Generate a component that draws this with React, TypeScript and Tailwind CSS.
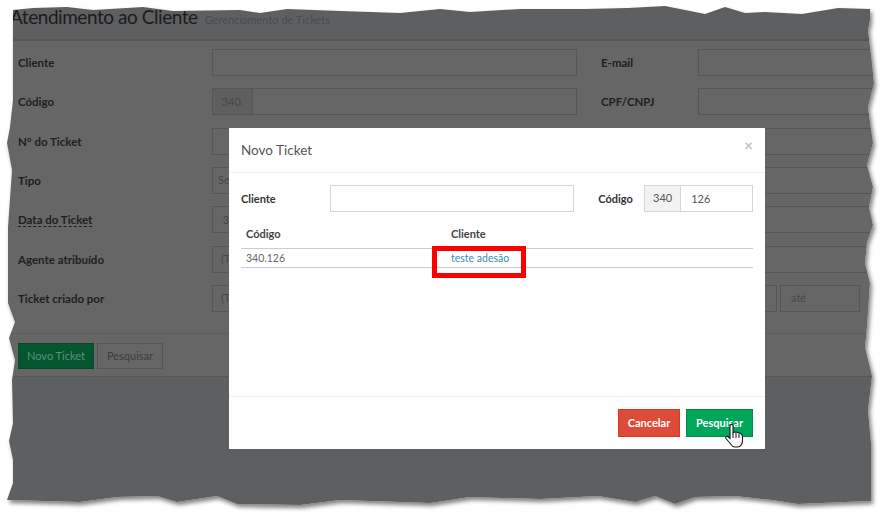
const font = { fontFamily: '"Lato", "Open Sans", sans-serif' };

const outline =
  'M13 10 L33 8 L67 7 L93 10 L143 7 L173 11 L240 10 L260 13 L287 9 L340 11 L400 13 L440 9 L470 12 L520 9 L585 9 L628 8 L665 6 L705 14 L725 7 L745 13 L765 12 L802 14 L838 8 L870 9 L870 20 L868 30 L872 63 L874 83 L868 107 L873 143 L867 165 L873 187 L869 207 L873 225 L867 242 L865 263 L870 283 L867 327 L865 347 L872 376 L868 410 L871 443 L871 501 L845 502 L798 504 L772 500 L735 496 L695 497 L675 504 L655 496 L635 502 L598 496 L540 499 L470 497 L430 503 L340 500 L300 505 L237 504 L217 496 L177 502 L157 496 L117 497 L80 502 L7 500 L13 483 L13 460 L9 441 L13 423 L12 380 L15 360 L9 338 L15 322 L8 303 L8 227 L12 170 L7 143 L10 127 L13 100 L13 33 Z';
const frame = 'M0 0H885V515H0Z ' + outline;

function Field({ className, children }: { className: string; children?: React.ReactNode }) {
  return (
    <div className={`h-[27px] border border-[#555657] text-[11px] text-[#474747] flex items-center ${className}`}>
      {children}
    </div>
  );
}

function Row({ label, right, left, dashed, rightField }: { label: string; right?: string; left?: React.ReactNode; dashed?: boolean; rightField?: React.ReactNode }) {
  return (
    <div className="flex items-center h-[27px] mb-[12.33px]">
      <div className="w-[212px] pl-[18px] shrink-0 text-[11.5px] font-bold text-[#202020]">
        <span className={dashed ? 'border-b border-dashed border-[#202020]' : ''}>{label}</span>
      </div>
      <div className="w-[365px] shrink-0">{left ?? <Field className="w-full" />}</div>
      {rightField ?? (
        <>
          <div className="w-[121px] pl-6 shrink-0 text-[11.5px] font-bold text-[#202020]">{right}</div>
          <Field className="flex-1 mr-[-40px]" />
        </>
      )}
    </div>
  );
}

export default function App() {
  return (
    <div className="relative w-[885px] h-[515px] overflow-hidden bg-[#5e5f60]" style={font}>
      <div className="h-[41px] border-b-2 border-[#555657] flex items-baseline pl-[10px] pt-[3px]">
        <span className="text-[19px] tracking-[-0.45px] text-[#1c1c1c]">Atendimento ao Cliente</span>
        <span className="ml-[7px] text-[11px] text-[#4a4b4c]">Gerenciamento de Tickets</span>
      </div>

      <div className="h-[336px] bg-[#666666] border-b border-[#555657] pt-[8px]">
        <Row label="Cliente" right="E-mail" />
        <Row
          label="Código"
          right="CPF/CNPJ"
          left={
            <div className="flex">
              <Field className="w-[41px] bg-[#5f5f5f] justify-center">340.</Field>
              <Field className="flex-1 border-l-0" />
            </div>
          }
        />
        <Row label="N° do Ticket" />
        <Row label="Tipo" left={<Field className="w-full pl-[5px]">Se</Field>} />
        <Row label="Data do Ticket" dashed left={<Field className="w-full pl-[10px]">3</Field>} />
        <Row label="Agente atribuído" left={<Field className="w-full pl-2">(T</Field>} />
        <Row
          label="Ticket criado por"
          left={<Field className="w-full pl-2">(T</Field>}
          rightField={
            <div className="flex">
              <Field className="w-[200px]" />
              <Field className="w-[80px] ml-[3px] pl-[10px]">até</Field>
            </div>
          }
        />
        <div className="border-t border-[#5c5c5c] mt-[21px] pt-[9px] pl-[18px] flex gap-[3px]">
          <button className="w-[76px] h-[26px] bg-[#05552f] border border-[#044a29] text-[11px] text-[#5f8f78]">Novo Ticket</button>
          <button className="w-[66px] h-[26px] bg-[#666666] border border-[#555657] text-[11px] text-[#3c3c3c]">Pesquisar</button>
        </div>
      </div>

      {/* modal */}
      <div className="absolute left-[229px] top-[128px] w-[536px] h-[321px] bg-white flex flex-col">
        <div className="h-[45px] border-b border-[#f0f0f0] pl-3 pr-3 flex items-center justify-between shrink-0">
          <span className="text-[13.5px] text-[#555]">Novo Ticket</span>
          <span className="text-[15px] font-bold text-[#c4c4c4] mb-[9px]">×</span>
        </div>
        <div className="flex-1 px-3 pt-3">
          <div className="flex items-center">
            <span className="w-[89px] pt-[1px] text-[11px] font-bold text-[#333]">Cliente</span>
            <div className="w-[245px] h-[27px] border border-[#d2d6de]" />
            <span className="ml-6 w-[46px] pt-[1px] text-[11px] font-bold text-[#333]">Código</span>
            <div className="w-[37px] h-[27px] border border-[#d2d6de] bg-[#f2f2f2] text-[11px] text-[#555] flex items-center justify-center">340</div>
            <div className="w-[72px] h-[27px] border border-l-0 border-[#d2d6de] pt-[1px] text-[11px] text-[#555] flex items-center pl-2.5">126</div>
          </div>
          <div className="mt-[9px] h-[28px] flex items-center border-b border-[#c9cdd1] text-[11px] font-bold text-[#444]">
            <span className="w-[210px] pl-[5px]">Código</span>
            <span>Cliente</span>
          </div>
          <div className="h-[19px] flex items-center border-b border-[#c9cdd1] pt-[1px] text-[10.5px] text-[#666]">
            <span className="w-[210px] pl-[5px]">340.126</span>
            <span className="text-[#3c8dbc]">teste adesão</span>
          </div>
        </div>
        <div className="h-[53px] border-t border-[#f0f0f0] flex items-center justify-end gap-1.5 pr-3 shrink-0">
          <button className="w-[62px] h-[28px] bg-[#dd4b39] border border-[#d73925] text-[11px] font-bold text-white">Cancelar</button>
          <button className="w-[67px] h-[28px] bg-[#00a65a] border border-[#008d4c] text-[11px] font-bold text-white">Pesquisar</button>
        </div>
      </div>

      {/* red highlight */}
      <div className="absolute left-[432px] top-[246px] w-[94px] h-[32px] border-[5px] border-[#ff0000]" />

      {/* cursor */}
      <svg className="absolute left-[724px] top-[423px]" width="21" height="25" viewBox="0 0 21 25">
        <path d="M6 2.500 C6.500 1 9 1 9 2.500 V9.500 L11.500 9 L14 9.500 L16.500 10.500 C18 11 18.500 12 18.500 14 V18 C18.500 21.500 16 24 13 24 H11 C9 24 8 23 7 21.500 L2 15.500 C1 14 3 12.500 4.500 14 L6 15.500 Z" fill="#fff" stroke="#1a1a1a" strokeWidth="1.100" />
        <path d="M9 9.500 V15 M12 10 V15 M15 10.500 V15" stroke="#1a1a1a" strokeWidth="1" fill="none" />
      </svg>

      {/* torn paper edge */}
      <svg className="absolute inset-0" width="885" height="515" viewBox="0 0 885 515">
        <defs>
          <filter id="tornShadow" x="-5%" y="-5%" width="110%" height="110%">
            <feGaussianBlur stdDeviation="2" />
          </filter>
          <clipPath id="outsidePaper">
            <path d={frame} clipRule="evenodd" />
          </clipPath>
        </defs>
        <path d={frame} fillRule="evenodd" fill="#ffffff" />
        <g clipPath="url(#outsidePaper)">
          <path d={outline} fill="#555" opacity="0.75" transform="translate(2 3)" filter="url(#tornShadow)" />
        </g>
      </svg>
    </div>
  );
}
